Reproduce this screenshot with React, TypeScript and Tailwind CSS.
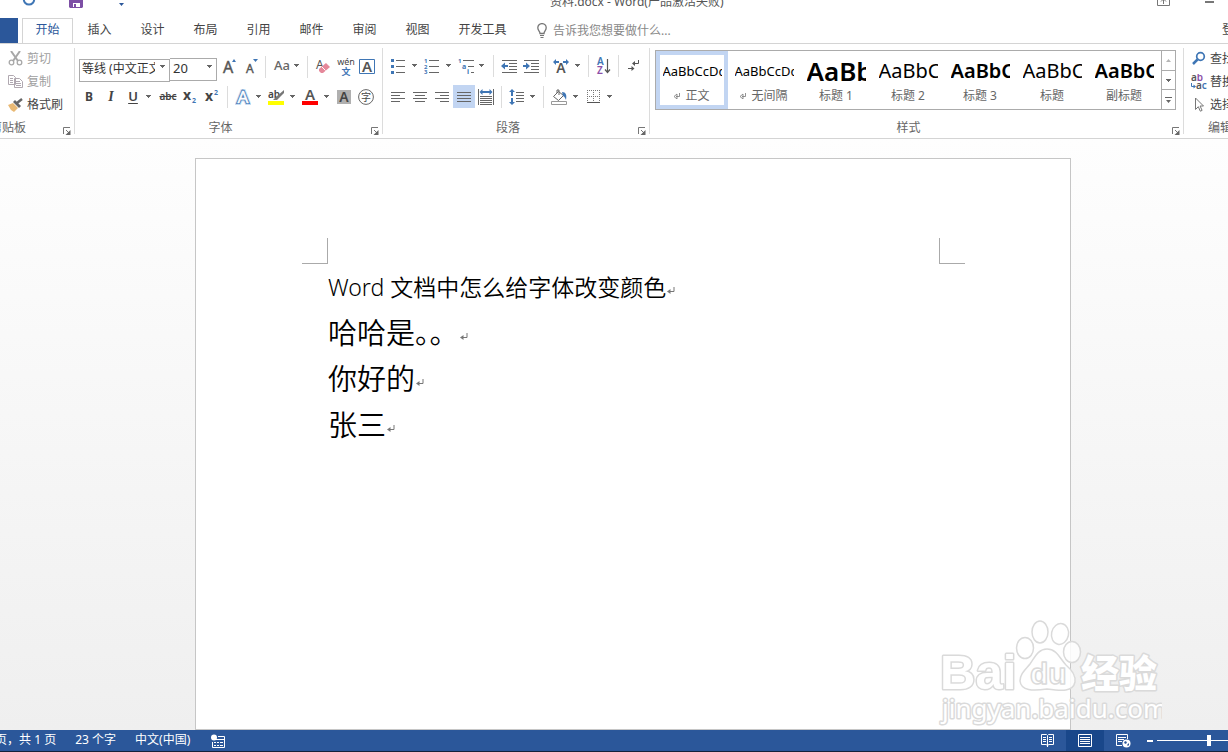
import type { ReactNode } from "react";
import { clsx } from "clsx";

const cjk = "font-['Noto_Sans','Noto_Sans_CJK_SC',sans-serif]";

const tabs = ["插入", "设计", "布局", "引用", "邮件", "审阅", "视图"];

const styles = [
  { name: "正文", sample: "AaBbCcDc", look: "text-[13px]", mark: true, active: true },
  { name: "无间隔", sample: "AaBbCcDc", look: "text-[13px]", mark: true },
  { name: "标题 1", sample: "AaBb", look: "text-[26px] font-semibold" },
  { name: "标题 2", sample: "AaBbC", look: "text-[20px]" },
  { name: "标题 3", sample: "AaBbC", look: "text-[20px] font-semibold" },
  { name: "标题", sample: "AaBbC", look: "text-[20px]" },
  { name: "副标题", sample: "AaBbC", look: "text-[20px] font-semibold" },
];

const lines = [
  { text: "Word 文档中怎么给字体改变颜色", size: "text-[23px]" },
  { text: "哈哈是。。", size: "text-[29px]" },
  { text: "你好的", size: "text-[29px]" },
  { text: "张三", size: "text-[29px]" },
];

function Svg({ w = 16, h = 16, children }: { w?: number; h?: number; children: ReactNode }) {
  return (
    <svg width={w} height={h} viewBox={`0 0 ${w} ${h}`} fill="none" className="shrink-0" aria-hidden="true">
      {children}
    </svg>
  );
}

function Tool({ label, className = "w-[22px]", children }: { label: string; className?: string; children: ReactNode }) {
  return (
    <button type="button" aria-label={label} className={clsx("flex h-[23px] shrink-0 items-center justify-center", className)}>
      {children}
    </button>
  );
}

function Triangle() {
  return (
    <Svg w={5} h={3}>
      <path d="M0 0h5v1H0zM1 1h3v1H1zM2 2h1v1H2z" fill="#666" />
    </Svg>
  );
}

function Caret({ label, className = "w-3" }: { label: string; className?: string }) {
  return (
    <button type="button" aria-label={label} className={clsx("flex h-[23px] shrink-0 items-center pl-[2px]", className)}>
      <Triangle />
    </button>
  );
}

function Sep({ className = "mx-1" }: { className?: string }) {
  return <span className={clsx("h-[22px] w-px shrink-0 bg-[#dcdcdc]", className)} />;
}

function Launcher({ label }: { label: string }) {
  return (
    <button type="button" aria-label={label} className="absolute right-[3px] bottom-px">
      <Svg w={8} h={8}>
        <path d="M.5 7V.5H7M3 3l3 3" stroke="#777" />
        <path d="M7.500 3v5h-5z" fill="#666" />
      </Svg>
    </button>
  );
}

function Group({ label, className, labelClass, launcher = true, children }: {
  label: string;
  className?: string;
  labelClass?: string;
  launcher?: boolean;
  children: ReactNode;
}) {
  return (
    <section aria-label={label} className={clsx("flex shrink-0 flex-col", className)}>
      <div className="h-[74px]">{children}</div>
      <div className="relative h-[18px] text-center text-xs leading-5 text-[#666]">
        <span className={labelClass}>{label}</span>
        {launcher && <Launcher label={`${label}选项`} />}
      </div>
    </section>
  );
}

function GroupLine() {
  return <span className="mt-1 h-[86px] w-px shrink-0 bg-[#dcdcdc]" />;
}

function ReturnMark() {
  return (
    <Svg w={8} h={8}>
      <path d="M7 0v4.500H2" stroke="#777" />
      <path d="M0 4.500 3.500 2v5z" fill="#777" />
    </Svg>
  );
}

/* horizontal rules drawn as [x, y, width] */
function Rules({ rows, color = "#666" }: { rows: number[][]; color?: string }) {
  return (
    <>
      {rows.map(([x, y, w]) => (
        <rect key={y} x={x} y={y} width={w} height="1" fill={color} />
      ))}
    </>
  );
}

function TitleBar() {
  return (
    <header className="h-[18px] shrink-0 overflow-hidden">
      <div className="-mt-3 flex h-7 items-center">
        <button type="button" aria-label="重复" className="ml-[22px]">
          <Svg w={14} h={14}>
            <path d="M10.500 0.500A5.200 5.200 0 1 1 3.500 0.500" stroke="#3f76b5" strokeWidth="2" />
          </Svg>
        </button>
        <button type="button" aria-label="保存" className="ml-[33px]">
          <Svg w={14} h={14}>
            <path d="M0 0h14v12l-1 1H1l-1-1z" fill="#7d4fa5" />
            <path d="M3 0h8v5H3zM4 8h7v4H4z" fill="#fff" />
            <path d="M5 9h2v3H5z" fill="#7d4fa5" />
          </Svg>
        </button>
        <button type="button" aria-label="自定义快速访问工具栏" className="ml-9 pt-1">
          <Svg w={5} h={3}>
            <path d="M0 0h5L2.500 3z" fill="#2b579a" />
          </Svg>
        </button>
        <h1 className="ml-[426px] text-xs whitespace-nowrap text-[#555]">资料.docx - Word(产品激活失败)</h1>
        <button type="button" aria-label="功能区显示选项" className="mr-[35px] ml-auto">
          <Svg w={13} h={10}>
            <path d="M.5.500h12v8H.5zM6.500 2v5M4 4.500 6.500 2 9 4.500" stroke="#777" />
          </Svg>
        </button>
        <button type="button" aria-label="最小化" className="mr-[14px] h-[2px] w-[9px] bg-[#777]" />
      </div>
    </header>
  );
}

function TabRow() {
  return (
    <nav className="flex h-[26px] shrink-0 overflow-hidden border-b border-[#d4d4d4] text-xs text-[#444]">
      <button type="button" aria-label="文件" className="mr-1 w-[18px] shrink-0 bg-[#2b579a]" />
      <button type="button" className="-mb-px h-[26px] w-[51px] shrink-0 border border-b-0 border-[#d4d4d4] bg-white pb-[3px] text-[#2b579a]">
        开始
      </button>
      {tabs.map((tab) => (
        <button key={tab} type="button" className="w-[53px] shrink-0 pb-px">
          {tab}
        </button>
      ))}
      <button type="button" className="w-[77px] shrink-0 pb-px">开发工具</button>
      <label className="ml-4 flex items-center gap-[6px]">
        <Svg w={10} h={15}>
          <path d="M3 10.500C3 8 .8 7.500.8 4.800a4.200 4.200 0 0 1 8.400 0C9.200 7.500 7 8 7 10.500z" stroke="#777" strokeWidth="1.300" />
          <path d="M3 12h4v1H3zM3.500 14h3v1h-3z" fill="#777" />
        </Svg>
        <input aria-label="操作说明搜索" placeholder="告诉我您想要做什么..." className="w-[140px] outline-none placeholder:text-[#888]" />
      </label>
      <button type="button" className="-mr-[18px] ml-auto shrink-0 pb-px">登录</button>
    </nav>
  );
}

function Clipboard() {
  return (
    <Group label="剪贴板" className="w-[74px]" labelClass="absolute -left-[10px]">
      <div className="flex flex-col pt-[3px] pl-2 text-xs">
        <button type="button" className="flex h-[23px] items-center gap-1 text-[#a0a0a0]">
          <Svg w={15} h={15}>
            <path d="M3 0l7 10M12 0 5 10" stroke="#a8a8a8" strokeWidth="2" />
            <circle cx="3.500" cy="11.500" r="2.300" stroke="#a8a8a8" strokeWidth="1.300" />
            <circle cx="11.500" cy="11.500" r="2.300" stroke="#a8a8a8" strokeWidth="1.300" />
          </Svg>
          剪切
        </button>
        <button type="button" className="flex h-[23px] items-center gap-1 text-[#a0a0a0]">
          <Svg w={15} h={15}>
            <path d="M.5 1.500h5l2 2v7h-7zM6.500 4.500h5l3 3v6h-8z" fill="#fff" stroke="#b0a8b0" />
            <path d="M2 4.500h3M2 6.500h3M2 8.500h3M8 7.500h4M8 9.500h5M8 11.500h5" stroke="#b0a8b0" />
          </Svg>
          复制
        </button>
        <button type="button" className="flex h-[23px] items-center gap-1 text-[#444]">
          <Svg w={15} h={14}>
            <path d="M0 7l5-2 5 5-4 4-3-2z" fill="#e9b974" />
            <path d="M5 4l2-2 6 6-2 2z" fill="#666" />
            <path d="M9 5l5-4" stroke="#666" strokeWidth="2.500" />
          </Svg>
          格式刷
        </button>
      </div>
    </Group>
  );
}

function FontGroup() {
  return (
    <Group label="字体" className="w-[307px]" labelClass="pr-4">
      <div className="flex items-center pt-[11px] pl-1">
        <div className="relative h-[23px] w-[91px] shrink-0">
          <select aria-label="字体名称" className="h-full w-full appearance-none border border-[#ababab] pr-[14px] pb-[2px] pl-[2px] text-xs text-[#333]">
            <option>等线 (中文正文)</option>
          </select>
          <span className="pointer-events-none absolute top-[10px] right-[5px]"><Triangle /></span>
        </div>
        <div className="relative h-[23px] w-[47px] shrink-0">
          <select aria-label="字号" className="h-full w-full appearance-none border border-l-0 border-[#ababab] pb-[3px] pl-[3px] text-[13px] text-[#333]">
            <option>20</option>
          </select>
          <span className="pointer-events-none absolute top-[10px] right-[5px]"><Triangle /></span>
        </div>
        <Tool label="增大字号" className="w-6">
          <Svg>
            <text x="2" y="14" fontSize="16" fill="#555" stroke="#555" strokeWidth=".4">A</text>
            <path d="M11 3l2-3 2 3z" fill="#3f76b5" />
          </Svg>
        </Tool>
        <Tool label="减小字号" className="w-[21px]">
          <Svg>
            <text x="2" y="14" fontSize="12" fill="#555" stroke="#555" strokeWidth=".4">A</text>
            <path d="M9 0h5l-2.500 3z" fill="#3f76b5" />
          </Svg>
        </Tool>
        <Sep className="mx-[3px]" />
        <Tool label="更改大小写" className="w-[35px] gap-1 pb-[2px] text-[13px] font-medium text-[#666]">
          Aa <Triangle />
        </Tool>
        <Sep className="mx-[3px]" />
        <Tool label="清除所有格式" className="w-6">
          <Svg>
            <text x="1" y="10" fontSize="12" fill="#555">A</text>
            <path d="M4 10l7-6 4 4-7 6H6l-2-2z" fill="#e5889a" />
            <path d="M6.500 7.500l4 4" stroke="#fff" />
          </Svg>
        </Tool>
        <Tool label="拼音指南" className="w-[21px]">
          <Svg w={18} h={18}>
            <text x="9" y="7" fontSize="9" textAnchor="middle" fill="#444">wén</text>
            <text x="9" y="17" fontSize="9" textAnchor="middle" fill="#3f76b5" fontWeight="bold">文</text>
          </Svg>
        </Tool>
        <Tool label="字符边框">
          <Svg>
            <path d="M.5.500h15v14H.5z" stroke="#3f76b5" />
            <text x="8" y="13" fontSize="15" textAnchor="middle" fill="#555" fontWeight="600">A</text>
          </Svg>
        </Tool>
      </div>
      <div className="flex items-center pt-[7px] pl-[3px] text-[#444]">
        <Tool label="加粗"><b className="text-[12px]">B</b></Tool>
        <Tool label="倾斜"><i className="font-['Liberation_Serif',serif] text-[14px] font-bold">I</i></Tool>
        <Tool label="下划线"><span className="text-[13px] font-semibold underline underline-offset-2">U</span></Tool>
        <Caret label="下划线样式" className="w-[13px] pl-1" />
        <Tool label="删除线"><span className="text-[10px] font-semibold line-through">abc</span></Tool>
        <Tool label="下标">
          <Svg>
            <text x="1" y="11" fontSize="14" fill="#444" fontWeight="bold">x</text>
            <text x="10" y="14" fontSize="7" fill="#3f76b5" fontWeight="bold">2</text>
          </Svg>
        </Tool>
        <Tool label="上标">
          <Svg>
            <text x="1" y="12" fontSize="14" fill="#444" fontWeight="bold">x</text>
            <text x="10" y="6" fontSize="7" fill="#3f76b5" fontWeight="bold">2</text>
          </Svg>
        </Tool>
        <Sep className="mx-1" />
        <Tool label="文本效果">
          <Svg>
            <text x="8" y="14" fontSize="17" textAnchor="middle" fill="#fff" stroke="#c5dbf1" strokeWidth="4">A</text>
            <text x="8" y="14" fontSize="17" textAnchor="middle" fill="#fff" stroke="#3f76b5" strokeWidth="2.200">A</text>
            <text x="8" y="14" fontSize="17" textAnchor="middle" fill="#fff" stroke="#fff" strokeWidth=".5">A</text>
          </Svg>
        </Tool>
        <Caret label="文本效果选项" className="w-[11px]" />
        <Tool label="突出显示">
          <Svg>
            <text x="0" y="9" fontSize="10" fill="#444" fontWeight="600">ab</text>
            <path d="M16 1l-8 7-3 3h4l7-7z" fill="#777" />
            <path d="M0 12h16v4H0z" fill="#ff0" />
          </Svg>
        </Tool>
        <Caret label="突出显示颜色" className="w-3 pl-[3px]" />
        <Tool label="字体颜色">
          <Svg>
            <text x="8" y="11" fontSize="15" textAnchor="middle" fill="#555" fontWeight="600">A</text>
            <path d="M0 12h16v4H0z" fill="red" />
          </Svg>
        </Tool>
        <Caret label="字体颜色选项" className="w-3 pl-[3px]" />
        <Tool label="字符底纹">
          <Svg w={14} h={14}>
            <path d="M0 0h14v14H0z" fill="#b0b0b0" />
            <text x="7" y="12" fontSize="14" textAnchor="middle" fill="#444" fontWeight="600">A</text>
          </Svg>
        </Tool>
        <Tool label="带圈字符">
          <Svg>
            <circle cx="8" cy="8" r="7.400" stroke="#666" />
            <text x="8" y="12" fontSize="10" textAnchor="middle" fill="#444">字</text>
          </Svg>
        </Tool>
      </div>
    </Group>
  );
}

function ParagraphGroup() {
  return (
    <Group label="段落" className="w-[266px]" labelClass="pr-4">
      <div className="flex items-center pt-[10px] pl-1">
        <Tool label="项目符号">
          <Svg w={14}>
            <path d="M0 1h3v3H0zM0 7h3v3H0zM0 13h3v3H0z" fill="#3f76b5" />
            <Rules rows={[[5, 2, 9], [5, 8, 9], [5, 14, 9]]} />
          </Svg>
        </Tool>
        <Caret label="项目符号库" className="w-3 pl-[3px]" />
        <Tool label="编号">
          <Svg>
            <text x="0" y="5" fontSize="6" fill="#3f76b5" fontWeight="bold">1</text>
            <text x="0" y="11" fontSize="6" fill="#3f76b5" fontWeight="bold">2</text>
            <text x="0" y="16" fontSize="6" fill="#3f76b5" fontWeight="bold">3</text>
            <Rules rows={[[5, 2, 10], [5, 8, 10], [5, 14, 10]]} />
          </Svg>
        </Tool>
        <Caret label="编号库" className="w-3 pl-[3px]" />
        <Tool label="多级列表">
          <Svg>
            <text x="0" y="5" fontSize="6" fill="#3f76b5" fontWeight="bold">1</text>
            <text x="4" y="11" fontSize="7" fill="#3f76b5" fontWeight="bold">a</text>
            <text x="9" y="16" fontSize="7" fill="#3f76b5" fontWeight="bold">i</text>
            <Rules rows={[[5, 2, 11], [10, 8, 6], [13, 14, 3]]} />
          </Svg>
        </Tool>
        <Caret label="多级列表库" />
        <Sep />
        <Tool label="减少缩进量">
          <Svg>
            <Rules rows={[[1, 2, 15], [8, 5, 8], [8, 8, 8], [8, 11, 8], [1, 14, 15]]} />
            <path d="M0 8l4-3.500V7h3v2H4v2.500z" fill="#3f76b5" />
          </Svg>
        </Tool>
        <Tool label="增加缩进量">
          <Svg>
            <Rules rows={[[1, 2, 15], [8, 5, 8], [8, 8, 8], [8, 11, 8], [1, 14, 15]]} />
            <path d="M7 8 3 4.500V7H0v2h3v2.500z" fill="#3f76b5" />
          </Svg>
        </Tool>
        <Sep className="mx-[3px]" />
        <Tool label="中文版式" className="w-6">
          <Svg>
            <text x="8" y="15" fontSize="14" textAnchor="middle" fill="#555" fontWeight="600">A</text>
            <path d="M0 4l3-3v2h3v2H3v2zM16 4l-3-3v2h-3v2h3v2z" fill="#3f76b5" />
          </Svg>
        </Tool>
        <Caret label="中文版式选项" className="w-[11px]" />
        <Sep />
        <Tool label="排序">
          <Svg h={18}>
            <text x="1" y="8" fontSize="10" fill="#3f76b5" fontWeight="600">A</text>
            <text x="1" y="17" fontSize="10" fill="#8b4fa8" fontWeight="600">Z</text>
            <path d="M11.500 2v13M9 12.500l2.500 3 2.500-3" stroke="#555" strokeWidth="1.200" />
          </Svg>
        </Tool>
        <Sep className="mx-[3px]" />
        <Tool label="显示编辑标记" className="w-6">
          <Svg w={12} h={14}>
            <path d="M10.500 1v3.500H6M0 9.500h5" stroke="#555" />
            <path d="M4 4.500l3-2.500v5zM6.500 9.500l-3-2.500v5z" fill="#555" />
          </Svg>
        </Tool>
      </div>
      <div className="flex items-center pt-2 pl-1">
        <Tool label="左对齐">
          <Svg w={14} h={12}><Rules rows={[[0, 1, 14], [0, 4, 9], [0, 7, 14], [0, 10, 9]]} /></Svg>
        </Tool>
        <Tool label="居中">
          <Svg w={14} h={12}><Rules rows={[[0, 1, 14], [2, 4, 10], [0, 7, 14], [2, 10, 10]]} /></Svg>
        </Tool>
        <Tool label="右对齐">
          <Svg w={14} h={12}><Rules rows={[[0, 1, 14], [5, 4, 9], [0, 7, 14], [5, 10, 9]]} /></Svg>
        </Tool>
        <Tool label="两端对齐" className="w-[22px] bg-[#c2d5f2]">
          <Svg w={14} h={12}><Rules rows={[[0, 1, 14], [0, 4, 14], [0, 7, 14], [0, 10, 14]]} /></Svg>
        </Tool>
        <Tool label="分散对齐">
          <Svg>
            <path d="M0 0h1v16H0zM15 0h1v16h-1z" fill="#666" />
            <path d="M1.500 3l3-3v2h7V0l3 3-3 3V4h-7v2z" fill="#3f76b5" />
            <Rules rows={[[2, 7, 12], [2, 9, 12], [2, 11, 12], [2, 13, 12], [2, 15, 12]]} />
          </Svg>
        </Tool>
        <Sep />
        <Tool label="行和段落间距">
          <Svg>
            <path d="M3 0l3 3H4v4H2V3H0zM3 16l3-3H4V9H2v4H0z" fill="#3f76b5" />
            <Rules rows={[[7, 3, 8], [7, 6, 8], [7, 9, 8], [7, 12, 8]]} />
          </Svg>
        </Tool>
        <Caret label="间距选项" className="w-[11px]" />
        <Sep />
        <Tool label="底纹">
          <Svg>
            <path d="M2.500 7.500l5-5 5 4-5 5zM6 4V1h2v5" fill="#fff" stroke="#666" />
            <path d="M11 3c4 0 5 3 4 8-1-2-1-3-3-4z" fill="#3f76b5" />
            <path d="M.5 12.500h15v3H.5z" fill="#fff" stroke="#999" />
          </Svg>
        </Tool>
        <Caret label="底纹颜色" className="w-3 pl-[3px]" />
        <Tool label="边框">
          <Svg w={13} h={13}>
            <path d="M.5 0v12M6.500 0v12M12.500 0v12M0 .5h13M0 6.500h13" stroke="#777" strokeDasharray="1 1" />
            <path d="M0 12h13v1H0z" fill="#555" />
          </Svg>
        </Tool>
        <Caret label="边框选项" className="w-4 pl-[3px]" />
      </div>
    </Group>
  );
}

function StylesGroup() {
  return (
    <Group label="样式" className="w-[533px]" labelClass="pr-4">
      <div className="pt-[6px] pl-[5px]">
        <div className="flex h-[60px] w-[521px] border border-[#ababab]">
          {styles.map((style) => (
            <button
              key={style.name}
              type="button"
              className={clsx(
                "flex w-[72px] shrink-0 flex-col items-center border-4",
                style.active ? "border-[#c2d5f2]" : "border-transparent",
              )}
            >
              <span className={clsx("block h-8 w-[59px] overflow-hidden text-left leading-8 whitespace-nowrap text-black", style.look)}>
                {style.sample}
              </span>
              <span className="flex h-[18px] items-center gap-[5px] text-xs whitespace-nowrap text-[#666]">
                {style.mark && <Svg w={6} h={6}><path d="M5.500 0v3.500H2M0 3.500 3 1v5z" stroke="#777" strokeWidth=".8" /></Svg>}
                {style.name}
              </span>
            </button>
          ))}
          <div className="ml-auto flex w-[14px] flex-col divide-y divide-[#ababab] border-l border-[#ababab]">
            <button type="button" aria-label="上一行" className="flex flex-1 items-center justify-center">
              <Svg w={5} h={3}><path d="M0 3h5L2.500 0z" fill="#b5b5b5" /></Svg>
            </button>
            <button type="button" aria-label="下一行" className="flex flex-1 items-center justify-center">
              <Triangle />
            </button>
            <button type="button" aria-label="其他样式" className="flex flex-1 items-center justify-center">
              <Svg w={7} h={6}><path d="M0 0h7v1H0zM1 3h5L3.500 6z" fill="#666" /></Svg>
            </button>
          </div>
        </div>
      </div>
    </Group>
  );
}

function EditGroup() {
  return (
    <Group label="编辑" className="w-[72px]" launcher={false}>
      <div className="flex flex-col pt-[3px] pl-[7px] text-xs text-[#444]">
        <button type="button" className="flex h-[23px] items-center gap-[3px]">
          <Svg>
            <circle cx="9.500" cy="5.500" r="3.800" stroke="#3f76b5" strokeWidth="1.700" />
            <path d="M6.500 8.500 2 13" stroke="#3f76b5" strokeWidth="2.500" />
          </Svg>
          查找
        </button>
        <button type="button" className="flex h-[23px] items-center gap-[3px]">
          <Svg>
            <text x="0" y="7" fontSize="10" fontWeight="600"><tspan fill="#555">a</tspan><tspan fill="#8b4fa8">b</tspan></text>
            <text x="5" y="15" fontSize="10" fontWeight="600"><tspan fill="#555">a</tspan><tspan fill="#3f76b5">c</tspan></text>
            <path d="M.5 9v3.500H3" stroke="#3f76b5" />
            <path d="M5 12.500 2.500 10.500v4z" fill="#3f76b5" />
          </Svg>
          替换
        </button>
        <button type="button" className="flex h-[23px] items-center gap-[3px]">
          <Svg>
            <path d="M4.500 1v11.500l2.800-2.800 2 4.500 1.800-.8-2-4.400h3.400z" stroke="#777" />
          </Svg>
          选择
        </button>
      </div>
    </Group>
  );
}

function PageCanvas() {
  return (
    <main className="min-h-0 flex-1 overflow-hidden bg-linear-to-b from-[#fefefe] to-[#efefef] pt-[19px] pl-[195px]">
      <article className="h-full w-[876px] border border-[#c6c6c6] bg-white pt-[79px] pr-[105px] pl-[106px] text-black">
        <div className="flex justify-between">
          <span className="size-[26px] border-r border-b border-[#aaa]" />
          <span className="size-[26px] border-b border-l border-[#aaa]" />
        </div>
        <div className="pl-[26px] font-[350]">
          {lines.map((line) => (
            <p key={line.text} className={clsx("flex h-[46px] items-center gap-px whitespace-nowrap", line.size)}>
              {line.text}
              <span className="pt-2"><ReturnMark /></span>
            </p>
          ))}
        </div>
      </article>
    </main>
  );
}

function Watermark() {
  return (
    <svg width="224" height="112" viewBox="0 0 224 112" className="pointer-events-none absolute right-[66px] bottom-[20px]" role="img" aria-label="Baidu 经验">
      <g stroke="#dadada" strokeWidth="1.500" fill="#fff" fillOpacity=".85" strokeLinejoin="round">
        <ellipse cx="87" cy="28" rx="8.500" ry="10.500" />
        <ellipse cx="102" cy="12" rx="8" ry="11" />
        <ellipse cx="122" cy="14" rx="8.500" ry="10.500" transform="rotate(12 122 14)" />
        <ellipse cx="134" cy="32" rx="8.500" ry="10.500" />
        <path d="M109 29c10 0 13 10 19 16 7 6 10 11 9 17-2 10-13 9-28 7-14 2-26 2-27-8 0-7 5-11 10-17 5-7 8-15 17-15z" />
        <text x="2" y="69" fontSize="49" fontWeight="bold" paintOrder="stroke" strokeWidth="3" fillOpacity="1" fontFamily="Liberation Sans, sans-serif">Bai</text>
        <text x="92" y="64" fontSize="30" fontWeight="bold" strokeWidth="1.500" fontFamily="Liberation Sans, sans-serif">du</text>
        <text x="143" y="67" fontSize="38" fontWeight="900" paintOrder="stroke" strokeWidth="3" fillOpacity="1" fontFamily="Noto Sans CJK SC, sans-serif">经验</text>
        <text x="4" y="98" fontSize="26" paintOrder="stroke" strokeWidth="3" fillOpacity="1" fontFamily="Noto Sans, sans-serif">jingyan.baidu.com</text>
      </g>
    </svg>
  );
}

function StatusBar() {
  return (
    <footer className="flex h-[22px] shrink-0 items-stretch overflow-hidden border-b border-[#14233c] bg-[#2b579a] text-xs whitespace-nowrap text-white">
      <button type="button" className="-ml-[30px] shrink-0 pb-[2px]">第 1 页，共 1 页</button>
      <button type="button" className="ml-[19px] pb-[2px]">23 个字</button>
      <button type="button" className="ml-[19px] pb-[2px]">中文(中国)</button>
      <button type="button" aria-label="宏录制" className="ml-[21px]">
        <Svg w={14} h={14}>
          <circle cx="3" cy="3.500" r="3" fill="#fff" />
          <path d="M7 2.500h6.500v11h-12V8M1 5.500h12" stroke="#fff" />
          <path d="M3 8h2v1H3zM6 8h2v1H6zM9 8h3v1H9zM3 11h2v1H3zM6 11h2v1H6zM9 11h3v1H9z" fill="#fff" />
        </Svg>
      </button>
      <div className="-mr-[30px] ml-auto flex shrink-0">
        <button type="button" aria-label="阅读视图" className="flex w-[38px] items-center justify-center">
          <Svg w={13} h={13}>
            <path d="M.5.500h5l1 1 1-1h5v10h-5l-1 1.500-1-1.500h-5zM6.500 2v11M2 3.500h3M2 5.500h3M2 7.500h3M8 3.500h3M8 5.500h3M8 7.500h3" stroke="#fff" />
          </Svg>
        </button>
        <button type="button" aria-label="页面视图" className="flex w-[38px] items-center justify-center bg-[#19478a]">
          <Svg w={14} h={13}>
            <path d="M.5.500h13v12H.5zM2 3.500h10M2 5.500h10M2 7.500h10M2 9.500h10" stroke="#fff" />
          </Svg>
        </button>
        <button type="button" aria-label="Web 版式视图" className="flex w-[38px] items-center justify-center">
          <Svg w={15} h={14}>
            <path d="M6 11.500H.5V.5h11V5M2 3.500h8M2 5.500h6M2 7.500h4" stroke="#fff" />
            <circle cx="10.500" cy="9.500" r="4" fill="#fff" />
            <path d="M8 8l2-1 1 2-2 1zM11 11l2-2v2l-1 1z" fill="#2b579a" />
          </Svg>
        </button>
        <button type="button" aria-label="缩小" className="flex w-[15px] items-center justify-end pr-1">
          <span className="h-[2px] w-[6px] bg-white" />
        </button>
        <input
          type="range"
          aria-label="缩放"
          defaultValue={52}
          className="h-[21px] w-[101px] appearance-none bg-transparent [&::-webkit-slider-runnable-track]:h-px [&::-webkit-slider-runnable-track]:bg-white [&::-webkit-slider-thumb]:-mt-[5px] [&::-webkit-slider-thumb]:h-[11px] [&::-webkit-slider-thumb]:w-1 [&::-webkit-slider-thumb]:appearance-none [&::-webkit-slider-thumb]:bg-white"
        />
      </div>
    </footer>
  );
}

export default function App() {
  return (
    <div className={clsx("relative flex h-screen flex-col overflow-hidden bg-white", cjk)}>
      <TitleBar />
      <TabRow />
      <div className="flex h-[95px] shrink-0 overflow-hidden border-b border-[#d4d4d4]">
        <Clipboard />
        <GroupLine />
        <FontGroup />
        <GroupLine />
        <ParagraphGroup />
        <GroupLine />
        <StylesGroup />
        <GroupLine />
        <EditGroup />
      </div>
      <PageCanvas />
      <StatusBar />
      <Watermark />
    </div>
  );
}
